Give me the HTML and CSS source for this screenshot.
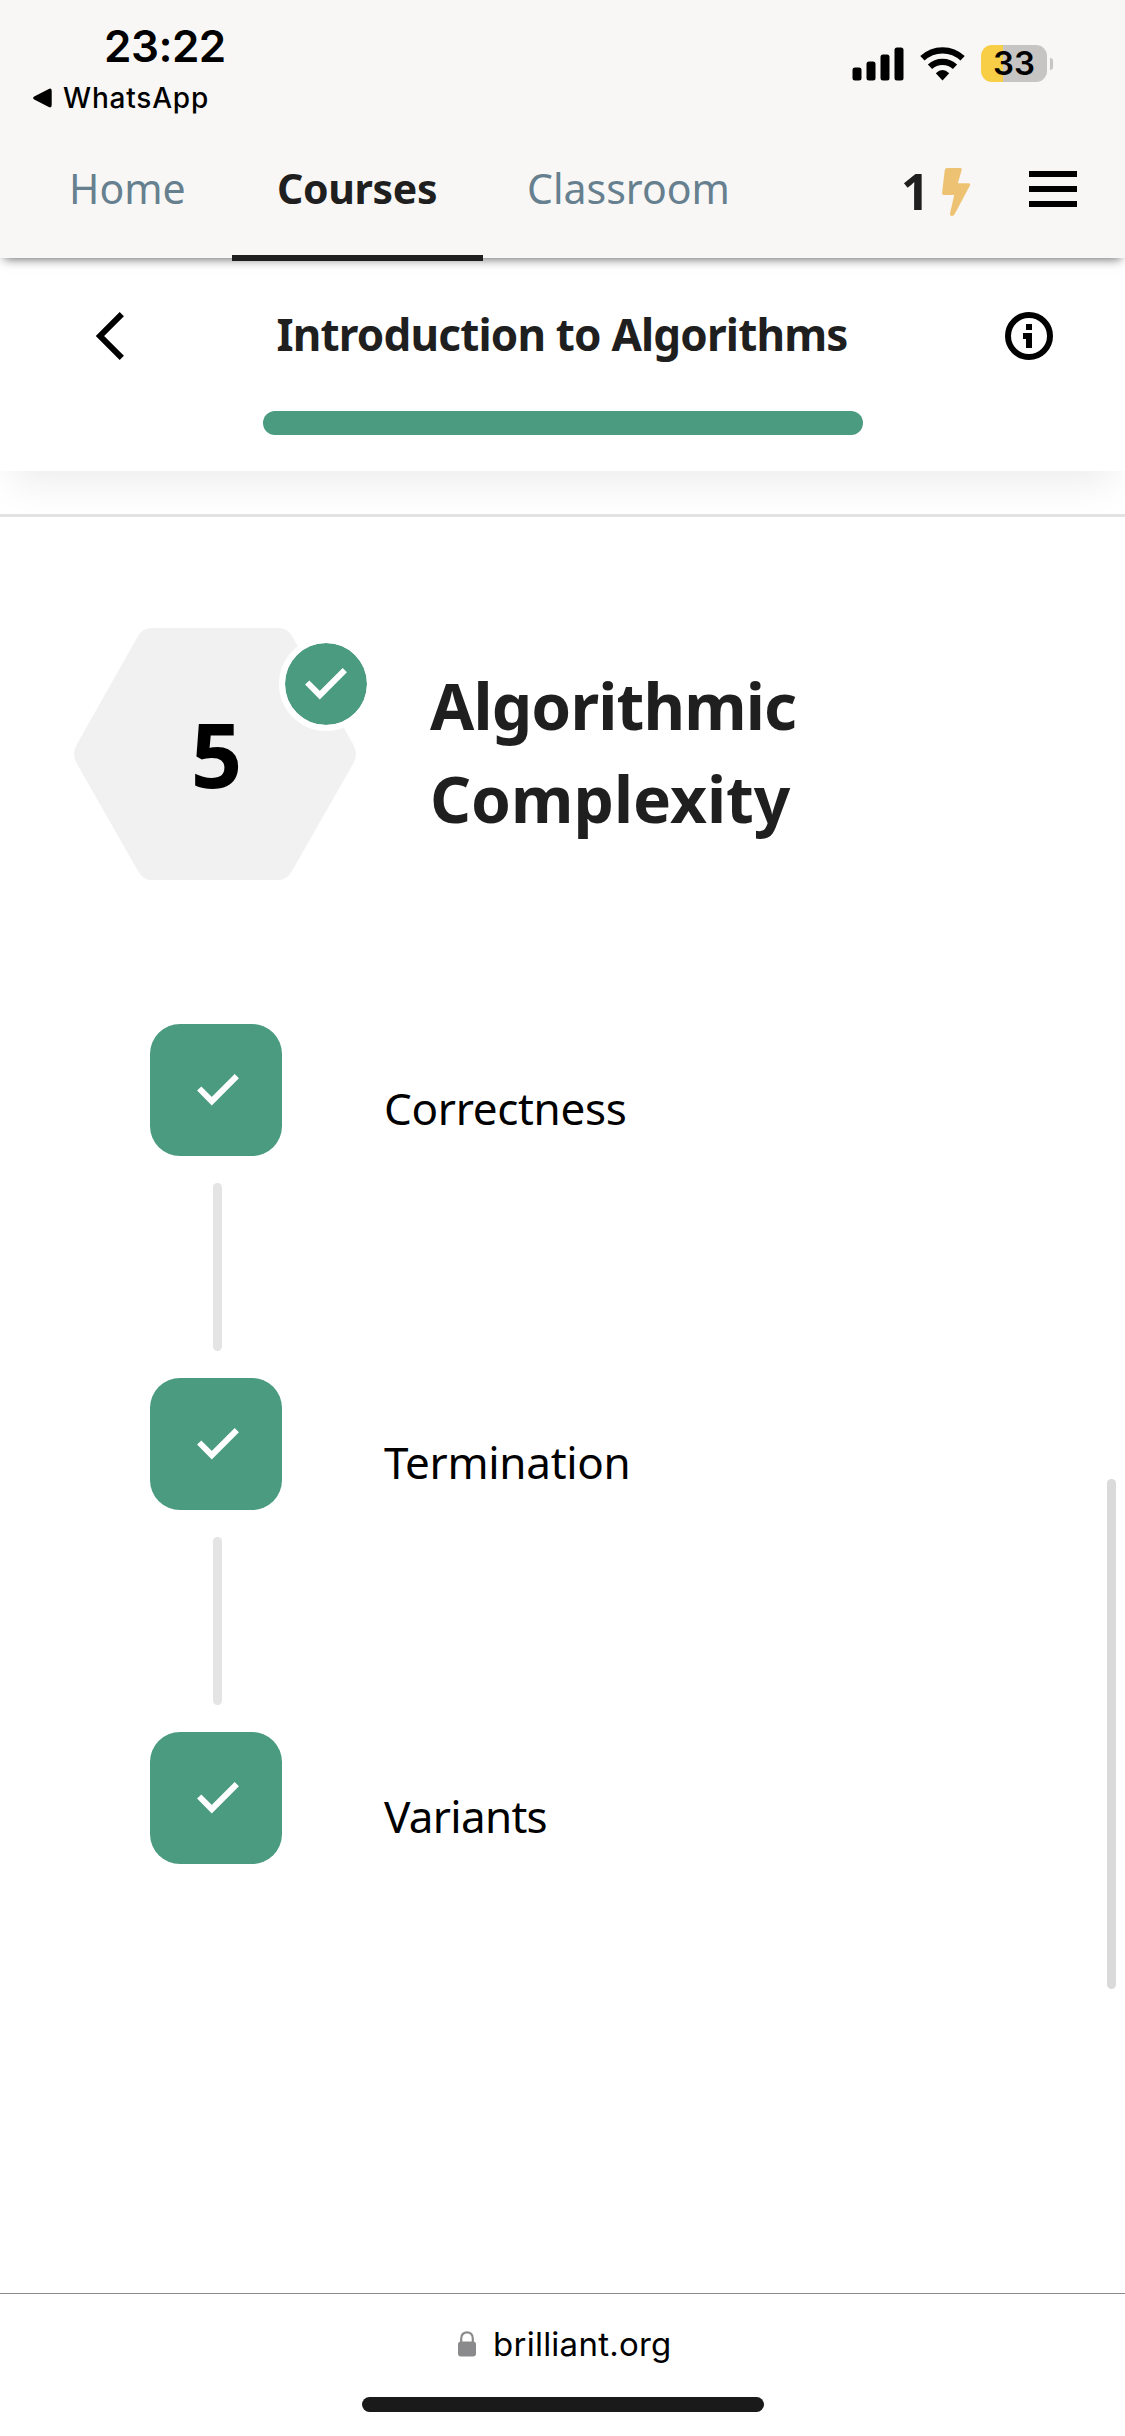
FILE: index.html
```html
<!DOCTYPE html>
<html lang="en">
<head>
<meta charset="utf-8">
<title>Introduction to Algorithms</title>
<link rel="stylesheet" href="styles.css">
</head>
<body>
<div class="screen">
  <header class="top">
    <div class="status">
      <div class="status-left">
        <div class="time">23:22</div>
        <div class="back-app">
          <svg class="back-arrow" width="19" height="20" viewBox="0 0 19 20"><path d="M1.2 8.4 15.8.9Q18.7-.2 18.7 3v14q0 3.2-2.9 2.1L1.2 11.6q-2.2-1.6 0-3.2z"/></svg>
          <span>WhatsApp</span>
        </div>
      </div>
      <div class="status-icons">
        <svg class="signal" width="52" height="34" viewBox="0 0 52 34"><rect x=".5" y="20.5" width="9" height="13" rx="2.5"/><rect x="14.5" y="14.5" width="9" height="19" rx="2.5"/><rect x="28.500" y="7.500" width="9" height="26" rx="2.500"/><rect x="42.500" y=".500" width="9" height="33" rx="2.500"/></svg>
        <svg class="wifi" width="46" height="34" viewBox="0 0 46 34">
          <g fill="none" stroke="#000" stroke-width="6.2"><path d="M2.400 11.300a29.200 29.200 0 0 1 40.200 0"/><path d="M10 19.700a18.400 18.400 0 0 1 25 0"/></g>
          <path d="M22.500 33.600 15.800 26.200q6.700-6.400 13.400 0z"/>
        </svg>
        <div class="battery"><span>33</span></div>
        <div class="battery-nub"></div>
      </div>
    </div>
    <nav class="nav">
      <a class="tab tab-home">Home</a>
      <a class="tab tab-active">Courses</a>
      <a class="tab tab-classroom">Classroom</a>
      <div class="streak">1</div>
      <svg class="bolt" width="29" height="48" viewBox="0 0 29 48"><path d="M5.200 0H18q2.300 0 1.600 2.300L15.900 15.200H26.500q2.400 0 1.300 2.500L12.600 46.300Q11.700 48 10 48q-2.300 0-2-2.500L12.200 27H2Q-.1 27 .1 24.800L2.700 2.300Q2.900 0 5.200 0z" fill="#edc373"/></svg>
      <div class="burger"><i></i><i></i><i></i></div>
    </nav>
  </header>

  <section class="course">
    <div class="course-row">
      <svg class="chevron" width="28" height="48" viewBox="0 0 28 48"><path d="M25.800 2.200 4 24l21.800 21.800" fill="none" stroke="#000" stroke-width="6"/></svg>
      <h1 class="course-title">Introduction to Algorithms</h1>
      <svg class="info" width="48" height="48" viewBox="0 0 48 48"><circle cx="24" cy="24" r="21" fill="none" stroke="#000" stroke-width="6"/><path d="M21 12h6v6h-6zM18 21h9v15h-6v-9h-3z"/></svg>
    </div>
    <div class="progress"></div>
  </section>

  <main class="content">
    <div class="unit">
      <div class="hex">
        <svg width="282" height="252" viewBox="0 0 282 252"><path d="M77 0H205Q213 0 218 8L279 116Q285 126 279 136L218 243Q213 252 205 252H77Q69 252 64 243L3 136Q-3 126 3 116L64 8Q69 0 77 0z" fill="#f1f1f1"/></svg>
        <span class="hex-number">5</span>
        <div class="badge">
          <svg width="42" height="32" viewBox="0 0 42 32"><path d="M2.200 14.500 14.800 27.200 39.800 2.200" fill="none" stroke="#fff" stroke-width="6"/></svg>
        </div>
      </div>
      <h2 class="unit-title"><span class="tight">Algorithmic</span><br>Complexity</h2>
    </div>

    <div class="steps">
      <div class="step">
        <div class="rail"><div class="tile"><svg width="42" height="32" viewBox="0 0 42 32"><path d="M2.200 14.500 14.800 27.200 39.800 2.200" fill="none" stroke="#fff" stroke-width="6"/></svg></div><div class="link"></div></div>
        <div class="step-name">Correctness</div>
      </div>
      <div class="step">
        <div class="rail"><div class="tile"><svg width="42" height="32" viewBox="0 0 42 32"><path d="M2.200 14.500 14.800 27.200 39.800 2.200" fill="none" stroke="#fff" stroke-width="6"/></svg></div><div class="link"></div></div>
        <div class="step-name">Termination</div>
      </div>
      <div class="step">
        <div class="rail"><div class="tile"><svg width="42" height="32" viewBox="0 0 42 32"><path d="M2.200 14.500 14.800 27.200 39.800 2.200" fill="none" stroke="#fff" stroke-width="6"/></svg></div></div>
        <div class="step-name"><span class="tight-step">Variants</span></div>
      </div>
    </div>
  </main>

  <footer class="address">
    <div class="domain">
      <svg width="18" height="26" viewBox="0 0 18 26"><rect y="10.500" width="18" height="15" rx="3" fill="#8a8a8c"/><path d="M3.200 12V7.500C3.200 3.500 5.800 1.300 9 1.300s5.800 2.200 5.800 6.200V12" fill="none" stroke="#8a8a8c" stroke-width="2.200"/></svg>
      <span>brilliant.org</span>
    </div>
    <div class="home-indicator"></div>
  </footer>
  <div class="scrollbar"></div>
</div>
</body>
</html>
```
FILE: styles.css
```css
* { box-sizing: border-box; }
body { margin: 0; background: #fff; font-family: "Noto Sans", "Open Sans", sans-serif; color: #000; }
svg { display: block; flex: none; }
h1, h2 { margin: 0; }

.screen { position: relative; display: flex; flex-direction: column; width: 1125px; height: 2436px; overflow: hidden; }

/* status bar and site navigation */
.top { position: relative; z-index: 2; flex: none; height: 258px; background: #f8f7f5; box-shadow: 0 5px 10px -4px rgba(0, 0, 0, .6); }
.status { display: flex; justify-content: space-between; height: 130px; padding: 19px 72px 0 33px; font-family: Inter, sans-serif; }
.status-left { display: flex; flex-direction: column; gap: 8px; }
.time { padding-left: 71px; font-size: 44px; line-height: 54px; font-weight: 600; letter-spacing: -.5px; }
.back-app { display: flex; align-items: center; gap: 11px; font-size: 28px; line-height: 34px; font-weight: 500; letter-spacing: .8px; }
.status-icons { display: flex; align-items: center; height: 37px; margin-top: 26px; }
.wifi { margin-left: 16px; }
.battery { display: flex; align-items: center; justify-content: center; width: 66px; height: 37px; margin-left: 15px; border-radius: 11px; background: linear-gradient(90deg, #f8ce46 22px, #c6c5c3 22px); font-size: 33px; line-height: 37px; font-weight: 600; }
.battery-nub { width: 3px; height: 12px; margin-left: 3px; border-radius: 0 3px 3px 0; background: #c6c5c3; }

.nav { display: flex; height: 128px; }
.tab { height: 128px; padding-top: 34px; font-size: 41px; line-height: 48px; color: #66808f; }
.tab-home { width: 232px; padding-left: 69px; }
.tab-active { width: 251px; height: 131px; padding-left: 45px; border-bottom: 6px solid #1f1f1f; color: #1f1f1f; font-weight: 700; letter-spacing: -.35px; }
.tab-classroom { width: 417px; padding-left: 44px; }
.streak { width: 42px; padding: 27px 0 0 1px; font-size: 50px; line-height: 68px; font-weight: 700; color: #1f1f1f; }
.bolt { margin-top: 38px; }
.burger { display: flex; flex-direction: column; gap: 9px; width: 48px; margin: 41px 0 0 58px; }
.burger i { height: 6px; background: #000; }

/* course header */
.course { position: relative; z-index: 1; flex: none; height: 213px; padding-top: 50px; background: #fff; box-shadow: 0 24px 36px -12px rgba(0, 0, 0, .075); }
.course-row { display: flex; align-items: center; height: 52px; padding: 0 72px 0 96px; }
.chevron, .info { margin-top: 3px; }
.info { margin-left: auto; }
.course-title { margin-left: 152.5px; font-size: 44px; line-height: 52px; font-weight: 700; letter-spacing: -.82px; color: #1f1f1f; white-space: nowrap; }
.progress { width: 600px; height: 24px; margin: 51px 0 0 263px; border-radius: 12px; background: #4a9b7f; }

/* unit and its lessons */
.content { flex: 1; margin-top: 43px; border-top: 3px solid #e2e2e2; padding-top: 111px; }
.unit { display: flex; padding-left: 74px; }
.hex { position: relative; width: 282px; height: 252px; }
.hex-number { position: absolute; left: 0; top: 71px; width: 285px; text-align: center; font-size: 90px; line-height: 108px; font-weight: 700; }
.badge { position: absolute; left: 205px; top: 9px; display: flex; align-items: center; justify-content: center; width: 94px; height: 94px; border: 6px solid #fff; border-radius: 50%; background: #4a9b7f; background-clip: padding-box; }
.unit-title { margin: 31px 0 0 74px; font-size: 64px; line-height: 93px; font-weight: 700; color: #1f1f1f; }
.tight { letter-spacing: -.85px; }

.steps { padding: 144px 0 0 150px; }
.step { display: flex; gap: 102px; height: 354px; }
.rail { width: 132px; }
.tile { display: flex; align-items: center; justify-content: center; height: 132px; padding-left: 4px; border-radius: 30px; background: #4a9b7f; }
.link { width: 9px; height: 168px; margin: 27px 0 0 63px; border-radius: 5px; background: #e4e4e4; }
.step-name { padding-top: 58px; font-size: 44px; line-height: 52px; letter-spacing: -.3px; }
.tight-step { letter-spacing: -.7px; }

/* browser address bar */
.address { flex: none; height: 143px; border-top: 1px solid #8c8c8c; padding-top: 30px; background: #fff; }
.domain { display: flex; align-items: center; gap: 17px; padding-left: 458px; font: 400 33px/40px Inter, sans-serif; letter-spacing: .25px; }
.home-indicator { width: 402px; height: 15px; margin: 33px 0 0 362px; border-radius: 8px; background: #1a1a1a; }
.scrollbar { position: absolute; left: 1107px; top: 1479px; width: 9px; height: 510px; border-radius: 5px; background: #dadada; }
```
